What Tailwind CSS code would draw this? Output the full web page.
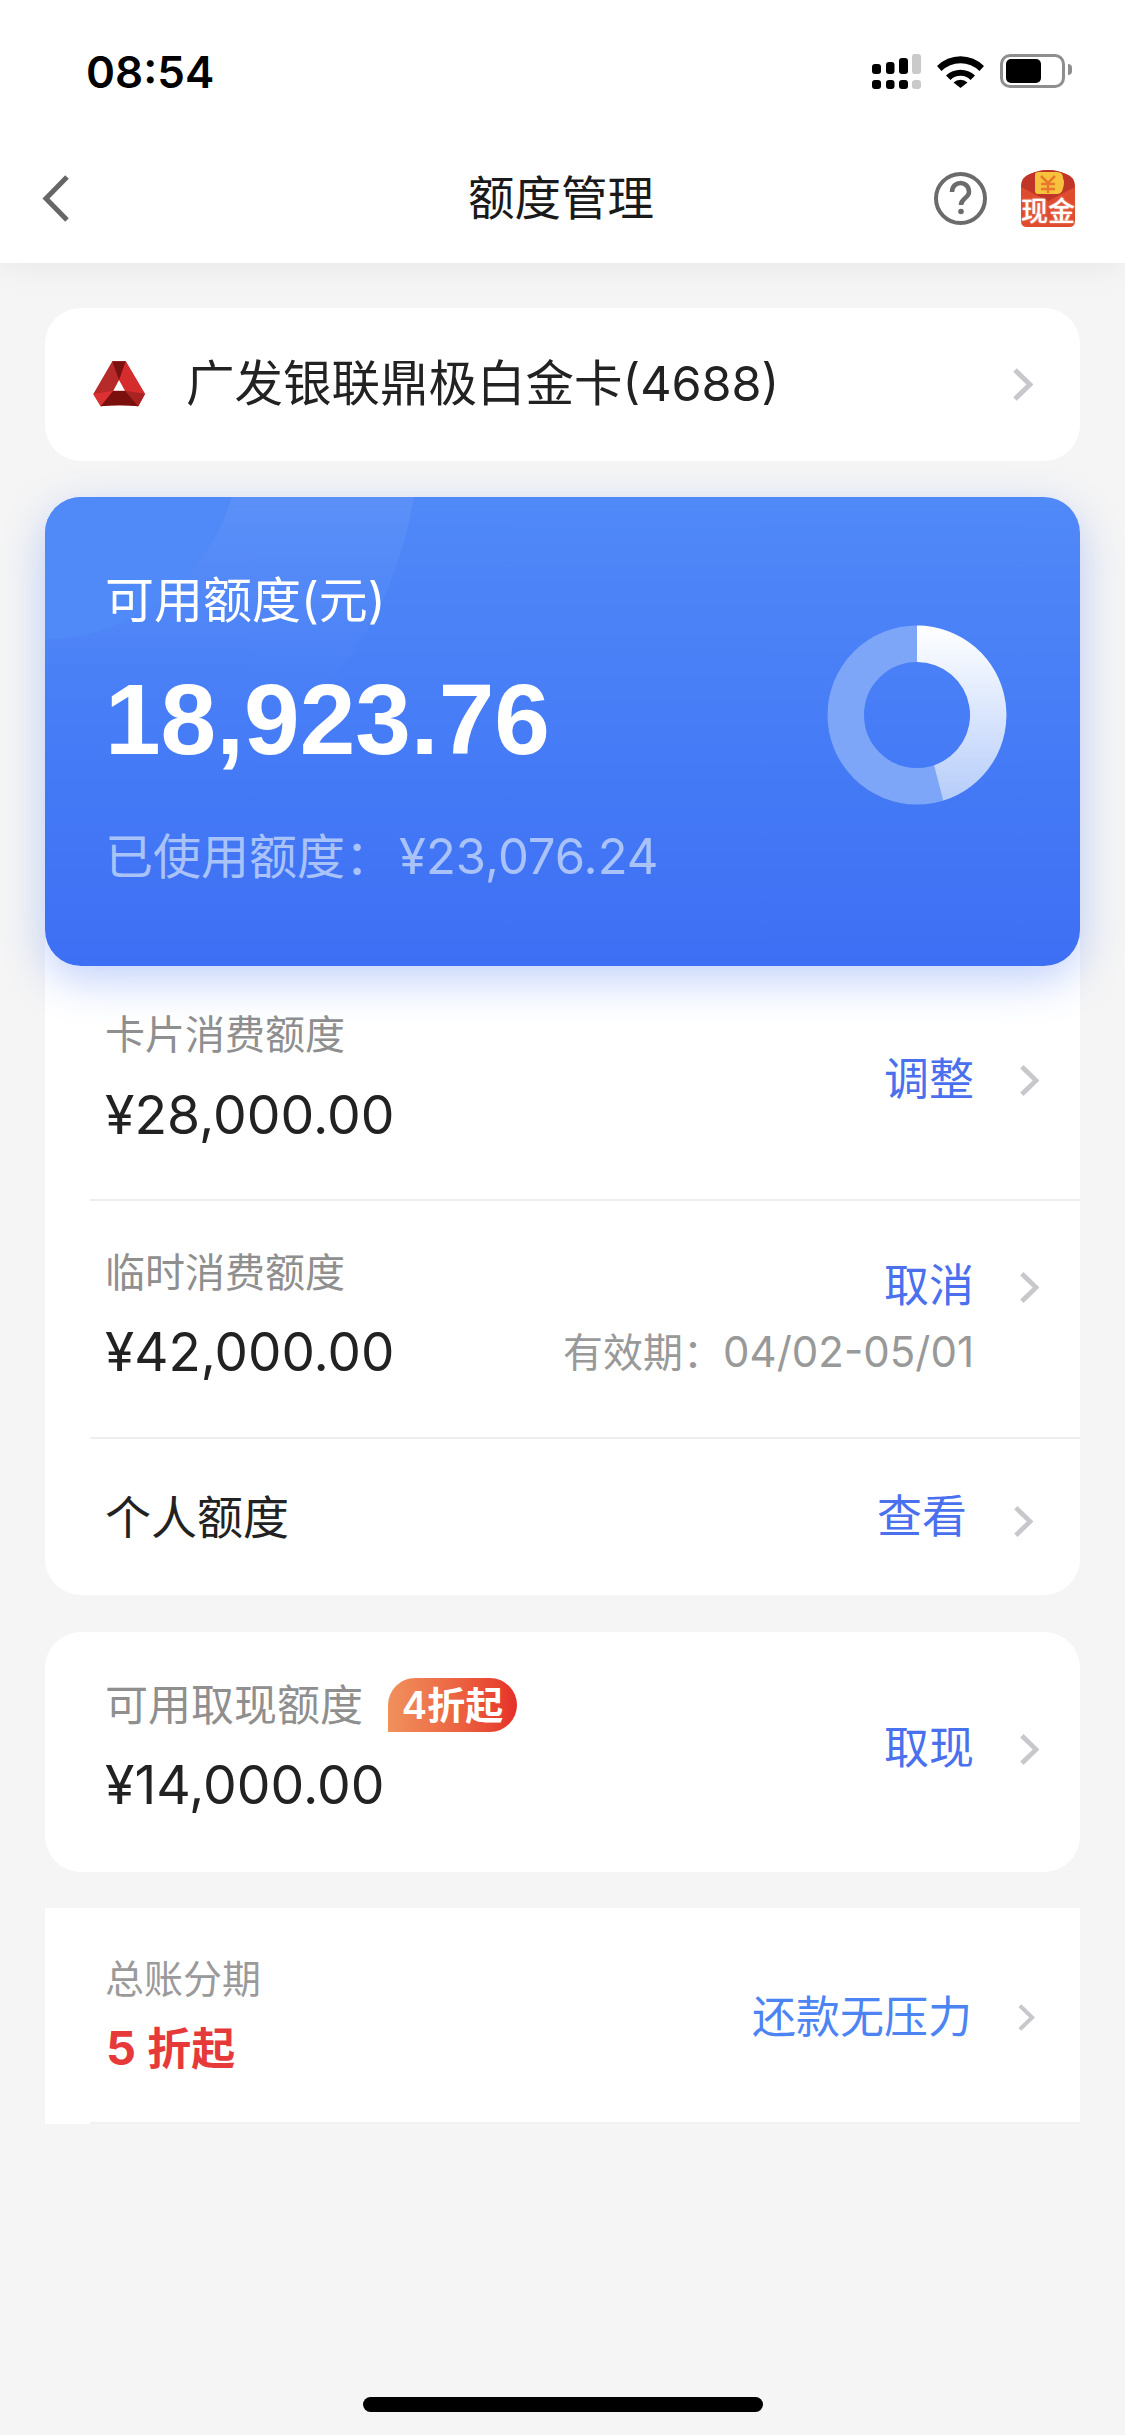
<!DOCTYPE html>
<html lang="zh-CN">
<head>
    <meta charset="UTF-8">
    <meta name="viewport" content="width=device-width, initial-scale=1.0">
    <title>额度管理</title>
    <script src="https://cdn.jsdelivr.net/npm/@tailwindcss/browser@4"></script>
</head>
<body class="bg-[#f5f5f5] font-[Inter,'Noto_Sans_CJK_SC',sans-serif]">
<div class="relative h-[2435px] w-[1125px] overflow-hidden">

    <!-- status bar + nav -->
    <header class="relative z-20 h-[263px] bg-white shadow-[0_6px_28px_rgba(0,0,0,0.05)]">
        <div class="flex h-[144px] items-center justify-between pl-[86px] pr-[53px]">
            <span class="text-[44px] leading-none font-semibold text-black">08:54</span>
            <div class="flex items-start">
                <svg class="mr-[16px]" width="49" height="36" viewBox="0 0 49 36">
                    <rect x="0" y="10" width="9" height="10" rx="3"/><rect x="14" y="8" width="8.5" height="12" rx="3"/><rect x="27" y="4" width="9" height="16" rx="3"/><rect x="40" y="0" width="9" height="20" rx="3" fill="#c9c9c9"/>
                    <rect x="0" y="26" width="9" height="9" rx="3"/><rect x="14" y="26" width="8.5" height="9" rx="3"/><rect x="27" y="26" width="9" height="9" rx="3"/><rect x="40" y="26" width="9" height="9" rx="3" fill="#c9c9c9"/>
                </svg>
                <svg class="mr-[16px]" width="47" height="34" viewBox="0 0 47 34">
                    <path d="M0 12A33 33 0 0 1 47 12L42.500 17A27 27 0 0 0 4.500 17Z"/>
                    <path d="M9 21.500A21 21 0 0 1 38 21.500L33.500 26A14 14 0 0 0 13.500 26Z"/>
                    <path d="M16.500 28.500A10 10 0 0 1 30.500 28.500L23.500 34Z"/>
                </svg>
                <div class="flex h-[34px] w-[65px] items-center rounded-[10px] border-[3px] border-[#8e8e8e] pl-[3px]">
                    <div class="h-[24px] w-[35px] rounded-[5px] bg-black"></div>
                </div>
                <div class="mt-[10px] ml-[3px] h-[11px] w-[4px] rounded-r-full bg-[#8e8e8e]"></div>
            </div>
        </div>
        <nav class="grid h-[108px] grid-cols-[1fr_auto_1fr] items-center pl-[44px] pr-[47px]">
            <svg class="-ml-[2px]" width="27" height="47" viewBox="0 0 27 47" fill="none" stroke="#666" stroke-width="5"><path d="M25 2L4 23.500L25 45"/></svg>
            <h1 class="text-[46.500px] leading-none font-normal text-[#1a1a1a]">额度管理</h1>
            <div class="mr-[2px] flex items-center justify-end gap-[33px]">
                <svg width="53" height="53" viewBox="0 0 53 53" fill="none" stroke="#6b6b6b" stroke-width="4">
                    <circle cx="26.500" cy="26.500" r="24.500"/>
                    <path d="M18 20C18 8 35 8 35 20C35 26 27 26 27 33" stroke-width="4.500"/>
                    <circle cx="27" cy="39.500" r="2.800" fill="#6b6b6b" stroke="none"/>
                </svg>
                <div class="relative h-[58px] w-[56px]">
                    <svg class="absolute inset-0" width="56" height="58" viewBox="0 0 56 58">
                        <path d="M1 18Q1 8 10 5Q28 -3 46 5Q55 8 55 18V52Q55 58 49 58H7Q1 58 1 52Z" fill="#df4b2e"/>
                        <path d="M1 18Q1 8 10 5Q28 -3 46 5Q55 8 55 18L28 32L1 18Z" fill="#bf3527"/>
                        <path d="M18 3H37Q43 3 43 9Q45 14 43 19Q42 25 37 25H18Q15 25 15 22V6Q15 3 18 3Z" fill="#f7c23c"/>
                        <path d="M21 7L28 14L35 7M28 14V24M21 15H35M21 20H35" fill="none" stroke="#e8792c" stroke-width="2.500"/>
                    </svg>
                    <span class="absolute top-[27px] left-0 w-[56px] text-center text-[27px] leading-[32px] font-medium whitespace-nowrap text-white [text-shadow:0_0_2px_#f8b8a4]">现金</span>
                </div>
            </div>
        </nav>
    </header>

    <main class="px-[45px] pt-[45px]">
        <!-- card selector -->
        <section class="flex h-[153px] items-center rounded-[36px] bg-white pl-[48px] pr-[47px]">
            <svg class="mr-[39px]" width="54" height="47" viewBox="23 32 54 47">
                <path d="M42.300 32.300H55.700L75 65L68.300 77.300Q50 75 30.700 77.300L23.300 65Z" fill="#b62a2a"/>
                <path d="M55.700 32.300L75 65L55 61.700L49 51Z" fill="#d52d2e"/>
                <path d="M42.300 32.300H55.700L49 51Z" fill="#7b1210"/>
                <path d="M23.300 65L43.300 61.700L30.700 77.300Z" fill="#dc3132"/>
                <path d="M75 65L55 61.700L68.300 77.300Z" fill="#a92322"/>
                <path d="M43.300 61.700H55L68.300 77.300Q50 75 30.700 77.300Z" fill="#7b0f0d"/>
                <path d="M49 51L55 61.700H43.300Z" fill="#fff"/>
            </svg>
            <span class="text-[48.500px] leading-none text-[#222]">广发银联鼎极白金卡(4688)</span>
            <svg class="ml-auto" width="21" height="33" viewBox="0 0 21 33" fill="none" stroke="#c7c7cc" stroke-width="5"><path d="M3 2L18 16.500L3 31"/></svg>
        </section>

        <!-- available credit -->
        <section class="relative z-10 mt-[36px] flex h-[469px] justify-between overflow-hidden rounded-[36px] bg-linear-to-b from-[#5089f8] to-[#3d6ff4] pr-[73px] pl-[60px] shadow-[0_14px_44px_rgba(61,111,243,0.32)]">
            <svg class="absolute inset-0" width="1035" height="469" viewBox="0 0 1035 469">
                <defs>
                    <linearGradient id="ringFade" x1="0" y1="0" x2="0" y2="1">
                        <stop offset="0.15" stop-color="#fff" stop-opacity="0.16"/>
                        <stop offset="0.85" stop-color="#fff" stop-opacity="0"/>
                    </linearGradient>
                </defs>
                <circle cx="-5" cy="-57" r="378" fill="url(#ringFade)"/>
                <circle cx="-5" cy="-57" r="200" fill="#5089f8"/>
            </svg>
            <div class="relative pt-[74px]">
                <p class="text-[49px] leading-[60px] text-white">可用额度(元)</p>
                <p class="mt-[38px] font-['Liberation_Sans'] text-[100px] leading-[100px] font-bold text-white">18,923.76</p>
                <p class="mt-[58px] text-[48px] leading-[60px] whitespace-nowrap text-[#a9c3f9]">已使用额度：<span class="ml-[6px] text-[49px]">¥23,076.24</span></p>
            </div>
            <svg class="relative mt-[128px] self-start" width="180" height="180" viewBox="0 0 180 180">
                <defs>
                    <linearGradient id="arcFill" x1="0" y1="0" x2="0" y2="1">
                        <stop offset="0" stop-color="#fff"/>
                        <stop offset="1" stop-color="#b6cdfa"/>
                    </linearGradient>
                </defs>
                <circle cx="90" cy="90" r="71.250" fill="none" stroke="#7ea6f8" stroke-width="36.500"/>
                <path d="M90 .500A89.500 89.500 0 0 1 116.300 175.500L107.100 140.200A53 53 0 0 0 90 37Z" fill="url(#arcFill)"/>
            </svg>
        </section>

        <!-- limits list -->
        <section class="-mt-[36px] rounded-b-[36px] bg-white pt-[36px] pl-[45px]">
            <div class="flex h-[235px] justify-between border-b-2 border-[#eeeeee] pt-[41px] pr-[41px] pl-[15px]">
                <div>
                    <p class="text-[40px] leading-[56px] text-[#8f8f8f]">卡片消费额度</p>
                    <p class="mt-[22px] text-[53.500px] leading-[60px] text-[#222]">¥28,000.00</p>
                </div>
                <div class="mt-[43px] flex h-[60px] items-center gap-[45px]">
                    <span class="text-[45px] leading-[60px] text-[#4a70ee]">调整</span>
                    <svg class="mt-[1px]" width="20" height="33" viewBox="0 0 21 33" fill="none" stroke="#c7c7cc" stroke-width="5"><path d="M3 2L18 16.500L3 31"/></svg>
                </div>
            </div>
            <div class="flex h-[238px] justify-between border-b-2 border-[#eeeeee] pt-[44px] pr-[41px] pl-[15px]">
                <div>
                    <p class="text-[40px] leading-[56px] text-[#8f8f8f]">临时消费额度</p>
                    <p class="mt-[21px] text-[53px] leading-[60px] text-[#222]">¥42,000.00</p>
                </div>
                <div class="mt-[11px] flex flex-col items-end">
                    <div class="flex h-[60px] items-center gap-[45px]">
                        <span class="text-[45px] leading-[60px] text-[#4a70ee]">取消</span>
                        <svg class="mt-[2px]" width="20" height="33" viewBox="0 0 21 33" fill="none" stroke="#c7c7cc" stroke-width="5"><path d="M3 2L18 16.500L3 31"/></svg>
                    </div>
                    <p class="mt-[8px] mr-[65px] text-[40px] leading-[56px] whitespace-nowrap text-[#999]">有效期：<span class="text-[42px]">04/02-05/01</span></p>
                </div>
            </div>
            <div class="flex h-[156px] items-center justify-between pr-[47px] pl-[15px]">
                <span class="text-[46px] leading-none text-[#222]">个人额度</span>
                <div class="flex items-center gap-[46px]">
                    <span class="text-[45px] leading-[60px] text-[#4a70ee]">查看</span>
                    <svg class="mt-[8px]" width="20" height="33" viewBox="0 0 21 33" fill="none" stroke="#c7c7cc" stroke-width="5"><path d="M3 2L18 16.500L3 31"/></svg>
                </div>
            </div>
        </section>

        <!-- cash -->
        <section class="mt-[37px] flex h-[240px] justify-between rounded-[36px] bg-white pt-[45px] pr-[41px] pl-[60px]">
            <div>
                <div class="flex items-center">
                    <span class="text-[43px] leading-[56px] text-[#8f8f8f]">可用取现额度</span>
                    <span class="ml-[25px] flex h-[54px] w-[129px] items-center justify-center rounded-t-[27px] rounded-br-[27px] bg-linear-to-r from-[#f0915d] to-[#e52f29] text-[38px] leading-none font-semibold whitespace-nowrap text-white">4折起</span>
                </div>
                <p class="mt-[22px] text-[53.500px] leading-[60px] text-[#222]">¥14,000.00</p>
            </div>
            <div class="mt-[41px] flex h-[60px] items-center gap-[45px]">
                <span class="text-[45px] leading-[60px] text-[#4a70ee]">取现</span>
                <svg class="mt-[2px]" width="20" height="33" viewBox="0 0 21 33" fill="none" stroke="#c7c7cc" stroke-width="5"><path d="M3 2L18 16.500L3 31"/></svg>
            </div>
        </section>

        <!-- instalments -->
        <section class="mt-[36px] bg-white pl-[45px]">
            <div class="flex h-[216px] items-start justify-between border-b-2 border-[#f1f1f1] pt-[43px] pr-[45px] pl-[15px]">
                <div>
                    <p class="text-[39px] leading-[56px] text-[#9a9a9a]">总账分期</p>
                    <p class="mt-[13px] pl-[1px] text-[47px] leading-[56px] font-bold text-[#e63a3a]">5 <span class="text-[44px] font-semibold">折起</span></p>
                </div>
                <div class="mt-[36px] flex h-[60px] items-center gap-[45px]">
                    <span class="text-[44px] leading-[60px] text-[#4c84f4]">还款无压力</span>
                    <svg width="18" height="27" viewBox="0 0 21 33" fill="none" stroke="#c7c7cc" stroke-width="5"><path d="M3 2L18 16.500L3 31"/></svg>
                </div>
            </div>
        </section>
    </main>

    <!-- home indicator -->
    <div class="absolute top-[2397px] left-[363px] h-[15px] w-[400px] rounded-full bg-black"></div>
</div>
</body>
</html>
